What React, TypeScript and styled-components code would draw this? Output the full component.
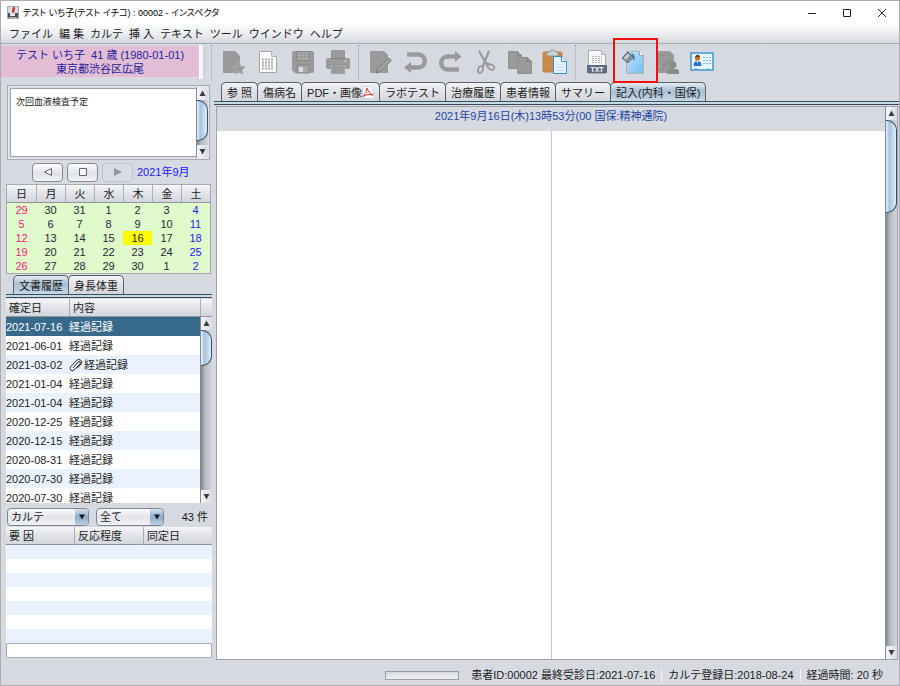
import React from "react";
import styled, { createGlobalStyle, css } from "styled-components";

const GlobalStyle = createGlobalStyle`
  *, *::before, *::after { box-sizing: border-box; }
  body { margin: 0; }
  body, button, input, select, textarea {
    font-family: "Liberation Sans", "Noto Sans CJK JP", sans-serif;
    font-size: 11px;
    line-height: 14px;
    color: #1c1c1c;
  }
`;

const headGradient = "linear-gradient(#f6f7f9, #e3e5ea 45%, #d3d6dd)";

const Window = styled.div`
  display: flex;
  flex-direction: column;
  height: 100vh;
  background: #d6d9e0;
  border: 1px solid #adadb0;
`;

const TitleBar = styled.header`
  display: flex;
  align-items: center;
  height: 23px;
  flex: none;
  padding-left: 6px;
  background: #fff;
`;

const Title = styled.h1`
  flex: 1;
  margin: 0 0 0 4px;
  font-size: 9px;
  font-weight: 400;
  font-feature-settings: "palt";
  white-space: nowrap;
  color: #000;
`;

const WindowButton = styled.button`
  display: grid;
  place-items: center;
  width: 35px;
  height: 22px;
  padding: 0;
  border: 0;
  background: none;
`;

const MenuBar = styled.nav`
  display: flex;
  align-items: center;
  gap: 6px;
  height: 20px;
  flex: none;
  padding-left: 8px;
  background: linear-gradient(#fcfcfd, #eceef1 50%, #d6d9df);
  border-bottom: 1px solid #a6abb4;
`;

const MenuItem = styled.button`
  padding: 0;
  border: 0;
  background: none;
  white-space: nowrap;
`;

const TopRow = styled.div`
  display: flex;
  align-items: center;
  height: 37px;
  flex: none;
  padding-bottom: 2px;
`;

const Patient = styled.div`
  width: 198px;
  height: 31px;
  padding-top: 2px;
  background: #e3bdd6;
  color: #23239a;
  text-align: center;
  white-space: pre;
`;

const Grip = styled.div`
  width: 6px;
  height: 34px;
  margin-right: 3px;
  border-radius: 0 3px 3px 0;
  background: linear-gradient(90deg, #fff, #eef0f3 60%, #b9bdc6);
`;

const Separator = styled.div`
  width: 1px;
  height: 34px;
  margin: 0 3px;
  border-left: 1px dotted #989ca5;
`;

const Toolbar = styled.div`
  display: flex;
  align-items: center;
`;

const ToolButton = styled.button<{ $marked?: boolean }>`
  position: relative;
  display: grid;
  place-items: center;
  width: 35px;
  height: 32px;
  padding: 0;
  border: 0;
  background: none;
  ${(p) =>
    p.$marked &&
    css`
      &::after {
        content: "";
        position: absolute;
        inset: -8px -9px -5px -1px;
        border: 2px solid #f01010;
        z-index: 2;
      }
    `}
`;

const Body = styled.div`
  display: flex;
  flex: 1;
  min-height: 0;
`;

const Side = styled.aside`
  display: flex;
  flex-direction: column;
  width: 213px;
  flex: none;
  padding: 4px 2px 2px 5px;
`;

const Memo = styled.div`
  display: flex;
  height: 75px;
  flex: none;
  margin: 0 2px 0 1px;
  padding: 1px;
  border: 1px solid #a4a9b3;
  outline: 1px solid #e6e8ec;
  outline-offset: -2px;
`;

const MemoText = styled.textarea`
  flex: 1;
  min-width: 0;
  margin: 1px 0 1px 1px;
  padding: 6px 5px;
  border: 1px solid #9da2ac;
  border-right: 0;
  background: #fff;
  font-size: 9px;
  resize: none;
  outline: none;
  overflow: hidden;
`;

const Scroll = styled.div`
  display: flex;
  flex-direction: column;
  width: 12px;
  flex: none;
  border-left: 1px solid #868b95;
  background: linear-gradient(90deg, #7f838c, #b5b9c1 35%, #d2d5db);
`;

const ScrollButton = styled.button`
  display: grid;
  place-items: center;
  height: 13px;
  flex: none;
  padding: 0;
  border: 0;
  background: linear-gradient(90deg, #f4f5f7, #d9dce2);
`;

const Track = styled.div`
  flex: 1;
  min-height: 0;
`;

const Thumb = styled.div<{ $length: number }>`
  height: ${(p) => p.$length}px;
  border: 1px solid #34506b;
  border-left: 0;
  border-radius: 0 10px 10px 0;
  background: linear-gradient(90deg, #e4eef7, #a9c4dc 35%, #b9d4ea 60%, #dceefa);
`;

const MonthNav = styled.div`
  display: flex;
  align-items: center;
  gap: 4px;
  height: 24px;
  flex: none;
  padding-left: 26px;
  color: #1a1aff;
`;

const NavButton = styled.button`
  display: grid;
  place-items: center;
  width: 31px;
  height: 19px;
  padding: 0;
  border: 1px solid #858a94;
  border-radius: 4px;
  background: linear-gradient(#fdfdfd, #e4e6ea 50%, #dcdfe4 51%, #f2f4f6);
  &:disabled {
    border-color: #bfc3ca;
    background: #d9dce2;
  }
`;

const Calendar = styled.table`
  width: 205px;
  flex: none;
  table-layout: fixed;
  border-collapse: separate;
  border-spacing: 0;
  border: 1px solid #a4a9b3;
  background: #e1facb;
  text-align: center;
`;

const DayHead = styled.th`
  height: 18px;
  padding: 0;
  font-weight: 400;
  background: ${headGradient};
  border-bottom: 1px solid #8f959f;
  & + & {
    border-left: 1px solid #a9adb6;
  }
`;

const Day = styled.td<{ $col: number; $today?: boolean }>`
  height: 14px;
  padding: 0;
  line-height: 13px;
  color: ${(p) => (p.$col === 0 ? "#e8287c" : p.$col === 6 ? "#1a1aff" : "#222838")};
  background: ${(p) => (p.$today ? "#ffff00" : "transparent")};
`;

const TabBar = styled.div<{ $inset: number }>`
  display: flex;
  flex: none;
  padding-left: ${(p) => p.$inset}px;
  border-bottom: 1px solid #3b4f63;
`;

const TabRail = styled.div`
  height: 3px;
  flex: none;
  background: #c3dbe1;
  border-bottom: 1px solid #3b4658;
`;

const Tab = styled.button<{ $active?: boolean }>`
  display: flex;
  align-items: center;
  height: 19px;
  padding: 1px 5px 0;
  border: 1px solid #5a606c;
  border-bottom: 0;
  border-radius: 5px 5px 0 0;
  margin-right: -1px;
  white-space: nowrap;
  background: ${(p) =>
    p.$active ? "linear-gradient(#e3ebf3, #a9bfd3 45%, #c3d7e6)" : "linear-gradient(#f3f4f6, #dfe1e6 50%, #d3d6dc)"};
`;

const SideTabs = styled.div`
  flex: none;
  margin-top: 1px;
`;

const ListArea = styled.div`
  display: flex;
  flex: 1;
  min-height: 0;
  margin-top: 1px;
`;

const ListClip = styled.div`
  flex: 1;
  min-width: 0;
  overflow: hidden;
`;

const ListSide = styled.div`
  display: flex;
  flex-direction: column;
`;

const HeadCorner = styled.div`
  height: 18px;
  flex: none;
  background: ${headGradient};
  border-left: 1px solid #a9adb6;
  border-bottom: 1px solid #8f959f;
`;

const ScrollHolder = styled.div`
  display: flex;
  flex: 1;
  min-height: 0;
`;

const DataTable = styled.table`
  width: 100%;
  flex: none;
  table-layout: fixed;
  border-collapse: separate;
  border-spacing: 0;
`;

const ColumnHead = styled.th<{ $width?: number }>`
  width: ${(p) => (p.$width ? `${p.$width}px` : "auto")};
  height: 18px;
  padding: 0 3px;
  text-align: left;
  font-weight: 400;
  background: ${headGradient};
  border-bottom: 1px solid #8f959f;
  & + & {
    border-left: 1px solid #a9adb6;
  }
`;

const Row = styled.tr<{ $selected?: boolean }>`
  background: #fff;
  &:nth-child(odd) {
    background: #ebf2ff;
  }
  ${(p) =>
    p.$selected &&
    css`
      &&:nth-child(odd) {
        background: #37698b;
        color: #fff;
      }
    `}
`;

const Cell = styled.td`
  height: 19px;
  padding: 0;
  white-space: nowrap;
  svg {
    vertical-align: -3px;
    margin-right: 1px;
  }
`;

const EmptyCell = styled.td`
  height: 14px;
  padding: 0;
`;

const Filters = styled.div`
  display: flex;
  align-items: center;
  gap: 7px;
  height: 24px;
  flex: none;
  padding: 4px 4px 0 1px;
`;

const SelectBox = styled.label<{ $width: number }>`
  position: relative;
  width: ${(p) => p.$width}px;
  select {
    display: block;
    width: 100%;
    height: 18px;
    padding: 0 3px;
    appearance: none;
    border: 1px solid #7f8692;
    border-radius: 4px;
    background: linear-gradient(#fbfbfc, #e2e4e9 50%, #f1f2f5);
  }
  svg {
    position: absolute;
    right: 1px;
    top: 1px;
    pointer-events: none;
  }
`;

const Count = styled.span`
  margin-left: auto;
`;

const Entry = styled.input`
  width: 100%;
  height: 15px;
  flex: none;
  padding: 0 3px;
  border: 1px solid #a4a9b3;
  background: #fff;
`;

const Main = styled.main`
  display: flex;
  flex-direction: column;
  flex: 1;
  min-width: 0;
  padding-top: 1px;
`;

const Document = styled.section`
  display: flex;
  flex: 1;
  min-height: 0;
  margin: 1px 1px 0 2px;
  border: 1px solid #9fa4ae;
`;

const Sheet = styled.div`
  display: flex;
  flex-direction: column;
  flex: 1;
  min-width: 0;
`;

const SheetTitle = styled.h2`
  height: 24px;
  flex: none;
  margin: 0;
  padding-top: 2px;
  font-size: 11px;
  font-weight: 400;
  text-align: center;
  white-space: nowrap;
  color: #2146a5;
`;

const Pages = styled.div`
  display: grid;
  grid-template-columns: 1fr 1fr;
  flex: 1;
`;

const Page = styled.div`
  background: #fff;
  & + & {
    border-left: 1px solid #c5c9d2;
  }
`;

const StatusBar = styled.footer`
  display: flex;
  align-items: center;
  justify-content: flex-end;
  height: 25px;
  flex: none;
  padding: 5px 16px 0 0;
  white-space: nowrap;
`;

const Gauge = styled.div`
  width: 74px;
  height: 9px;
  margin-right: 12px;
  border: 1px solid #999ea8;
  background: linear-gradient(#d5d8dd, #f0f1f3);
`;

const Status = styled.span`
  & + & {
    margin-left: 6px;
    padding-left: 6px;
    border-left: 1px solid #eceef2;
  }
`;

const G = "#9a9a9a";

function Icon({ children }: { children: React.ReactNode }) {
  return (
    <svg width="26" height="26" viewBox="0 0 26 26" fill="none" aria-hidden="true">
      {children}
    </svg>
  );
}

const NewDoc = () => (
  <Icon>
    <path d="M3 2h12l5 5v17H3z" fill={G} />
    <path d="m19 13 2 4.300 4.600.5-3.400 3.200.9 4.600-4.100-2.300-4.100 2.300.9-4.600-3.400-3.200 4.600-.5z" fill={G} stroke="#b4b6ba" strokeWidth=".7" />
  </Icon>
);
const GridDoc = () => (
  <Icon>
    <path d="M4.500 2.500h12l5 5v16h-17z" fill="#fafafa" stroke="#a5a5a5" />
    <path d="M16.500 2.500v5h5" fill="#e2e2e2" stroke="#b0b0b0" />
    <path d="M7 10.500h12M7 13.500h12M7 16.500h12M7 19.500h12" stroke="#b0b0b0" strokeWidth="2" strokeDasharray="2 1" />
  </Icon>
);
const Save = () => (
  <Icon>
    <path d="M2 4q0-2 2-2h18q2 0 2 2v18q0 2-2 2H5l-3-3z" fill={G} />
    <path d="M6.500 2.500h13v9h-13z" fill="#a9a9a9" stroke="#858585" />
    <path d="M8 5h10M8 8h10" stroke="#858585" strokeDasharray="2 1" />
    <path d="M7 16h12v8H7z" fill="#a7a7a7" stroke="#858585" />
    <path d="M9 18h4v5H9z" fill="#dadce0" />
  </Icon>
);
const Print = () => (
  <Icon>
    <path d="M6 1h14v8H6zM1 11q0-2 2-2h20q2 0 2 2v7q0 2-2 2H3q-2 0-2-2z" fill={G} />
    <path d="M6 9.500h14M5.500 15.500h15" stroke="#7f7f7f" />
    <path d="M6 16h14v9H6z" fill={G} stroke="#bcbec3" strokeWidth=".7" />
    <path d="M19 12h3" stroke="#c9cbcf" />
  </Icon>
);
const Edit = () => (
  <Icon>
    <path d="M3 2h14l4 4v18H3z" fill={G} />
    <path d="m9 24 1-4L22 9l2.500 2.500L13 22.500z" fill="#a0a0a0" stroke="#7d7d7d" />
    <path d="m9 24 .5-2 1.500 1.400z" fill="#666" />
  </Icon>
);
const Undo = () => (
  <Icon>
    <path d="M5 5.500h11c9 0 9 13 0 13H9" stroke={G} strokeWidth="4.500" />
    <path d="M2 18.500 9 13v11z" fill={G} />
  </Icon>
);
const Redo = () => (
  <Icon>
    <path d="M22 20.500H11c-9 0-9-13 0-13h7" stroke={G} strokeWidth="4.500" />
    <path d="M24.500 7.500 18 2v11z" fill={G} />
  </Icon>
);
const Cut = () => (
  <Icon>
    <path d="m7 2 8.500 15M17 2 10.500 18" stroke={G} strokeWidth="2.200" />
    <path d="m12 12 6 4" stroke={G} strokeWidth="2" />
    <ellipse cx="8.500" cy="20.500" rx="2.300" ry="3.500" transform="rotate(20 8.500 20.500)" stroke={G} strokeWidth="1.800" />
    <ellipse cx="19" cy="18" rx="3.500" ry="2.300" transform="rotate(30 19 18)" stroke={G} strokeWidth="1.800" />
  </Icon>
);
const Copy = () => (
  <Icon>
    <path d="M1.500 2.500h9l4 4v13h-13z" fill={G} stroke="#8f8f8f" />
    <path d="M10.500 8.500h10l4 4v12h-14z" fill={G} stroke="#8f8f8f" />
    <path d="M10.500 2.500v4h4M20.500 8.500v4h4" stroke="#838383" />
  </Icon>
);
const Paste = () => (
  <Icon>
    <rect x="1" y="3" width="19" height="20" rx="1.500" fill="#c98b4c" stroke="#b87d42" />
    <path d="M5 3h3q.5-2.500 2.500-2.500T13 3h3v4H5z" fill="#cdd1d6" stroke="#8d9299" strokeWidth=".8" />
    <path d="M11.500 7.500h8l5 5v12h-13z" fill="#e2f3fd" stroke="#3390c2" />
    <path d="M19.500 7.500v5h5" fill="#fff" stroke="#3390c2" />
    <path d="M14 15.500h8M14 18.500h8M14 21.500h8" stroke="#c3e2f4" />
  </Icon>
);
const TxtDoc = () => (
  <Icon>
    <path d="M4.500 1.500h13l4 4v19h-17z" fill="#f7f7f7" stroke="#aaa" />
    <path d="M17.500 1.500v4h4" fill="#ddd" stroke="#aaa" />
    <path d="M8 7.500h10M8 9.500h10M8 11.500h10M8 13.500h10" stroke="#b3b3b3" strokeDasharray="2 1" />
    <path d="M3 16h20v8H3z" fill="#5b6c7f" />
    <text x="13" y="23" fill="#fff" fontSize="7" fontWeight="700" textAnchor="middle" fontFamily="Liberation Sans">
      TXT
    </text>
  </Icon>
);
const FillDoc = () => (
  <Icon>
    <defs>
      <linearGradient id="sheetFill" x1="0" y1="0" x2="1" y2="1">
        <stop offset="0" stopColor="#c6e6fc" />
        <stop offset="1" stopColor="#74bcf3" />
      </linearGradient>
    </defs>
    <path d="M7.500 2.500h13l4 4v18h-17z" fill="url(#sheetFill)" stroke="#a8b6c2" />
    <path d="M20.500 2.500v4h4" fill="#fff" stroke="#98a8b5" />
    <path d="m3 9 6-6 5 5-5 6z" fill="#8b9198" stroke="#626970" />
    <path d="m5 9 4-4 1.500 1.500-4 4z" fill="#d8dcdf" />
    <path d="M12 4c4 1 4 4 3.500 8-2-1-2-3-2-5z" fill="#2a7cc4" />
  </Icon>
);
const StampDoc = () => (
  <Icon>
    <path d="M3 2h13l4 4v18H3z" fill={G} />
    <path d="m10 14 5-5 2 2-5 5-3 1zM6 6h6M6 20h5" stroke="#848484" />
    <circle cx="19" cy="16" r="3.500" fill="#8b8b8b" />
    <path d="M13 25v-3q0-2 3-2h6q3 0 3 2v3z" fill="#8b8b8b" />
  </Icon>
);
const Card = () => (
  <Icon>
    <path d="M2 4h22v17h-4l-1-1-1 1H8l-1-1-1 1H2z" fill="#e7f7ff" stroke="#3c9bcb" strokeWidth="1.500" />
    <circle cx="8.500" cy="9" r="2.600" fill="#c9702f" />
    <path d="M6 8q1-3 4-2l1 2z" fill="#643717" />
    <path d="M4.500 17q0-5 4-5t4 5z" fill="#2c73c4" />
    <path d="m7.500 12 1 2.500 1-2.500z" fill="#fff" />
    <path d="M14 8.500h8M14 11.500h8M14 14.500h8" stroke="#86bad7" strokeDasharray="2 1" />
  </Icon>
);

const Arrow = ({ down }: { down?: boolean }) => (
  <svg width="7" height="7" viewBox="0 0 7 7" aria-hidden="true">
    <path d={down ? "M.5 1h6L3.500 6.500z" : "M.5 6h6L3.500.5z"} fill="#3a3d44" />
  </svg>
);

const AppIcon = () => (
  <svg width="12" height="13" viewBox="0 0 12 13" aria-hidden="true">
    <path d="M.5.5h11v12H.5z" fill="#d5dbe0" stroke="#a4aab0" />
    <path d="M1 7h10v5H1z" fill="#454d57" />
    <path d="M3 7h5v3H3z" fill="#e4e8ec" />
    <path d="M6 1.500C9 3 4 4 7 6.500" stroke="#d3231c" strokeWidth="2" fill="none" />
    <path d="M2 11.500h8" stroke="#aab4bf" />
  </svg>
);

const PdfIcon = () => (
  <svg width="12" height="13" viewBox="0 0 12 13" aria-hidden="true">
    <path d="M.5.5h8l3 3v9H.5z" fill="#fbfbfb" stroke="#d3d3d3" />
    <path d="M1 10.500Q5 7 5 2q1 5 6 7-5-2-10 1.500z" fill="none" stroke="#e23a32" />
  </svg>
);

const Clip = () => (
  <svg width="14" height="14" viewBox="0 0 14 14" fill="none" stroke="#2b2b2b" aria-hidden="true">
    <path d="m4 10 5-6q1-1 2 0t0 2l-6 6q-2 1.500-3.300 0t0-3.300l6-6.500q2-1.700 4 0t.300 3.800L8 10.500" />
  </svg>
);

const SelectArrow = () => (
  <svg width="13" height="16" viewBox="0 0 13 16" aria-hidden="true">
    <defs>
      <linearGradient id="selectFace" x1="0" y1="0" x2="0" y2="1">
        <stop offset="0" stopColor="#d3e1ee" />
        <stop offset=".5" stopColor="#8eabc6" />
        <stop offset="1" stopColor="#b9d3e8" />
      </linearGradient>
    </defs>
    <path d="M0 0h10q3 0 3 3v10q0 3-3 3H0z" fill="url(#selectFace)" />
    <path d="M4 5.500h6l-3 5z" fill="#15181c" />
  </svg>
);

function ScrollBar({ thumb }: { thumb: number }) {
  return (
    <Scroll>
      <ScrollButton aria-label="上へ">
        <Arrow />
      </ScrollButton>
      <Track>
        <Thumb $length={thumb} />
      </Track>
      <ScrollButton aria-label="下へ">
        <Arrow down />
      </ScrollButton>
    </Scroll>
  );
}

const menus = ["ファイル", "編 集", "カルテ", "挿 入", "テキスト", "ツール", "ウインドウ", "ヘルプ"];

const tools: { label: string; icon: React.ReactNode; marked?: boolean }[][] = [
  [
    { label: "新規", icon: <NewDoc /> },
    { label: "開く", icon: <GridDoc /> },
    { label: "保存", icon: <Save /> },
    { label: "印刷", icon: <Print /> },
  ],
  [
    { label: "修正", icon: <Edit /> },
    { label: "元に戻す", icon: <Undo /> },
    { label: "やり直し", icon: <Redo /> },
    { label: "切り取り", icon: <Cut /> },
    { label: "コピー", icon: <Copy /> },
    { label: "貼り付け", icon: <Paste /> },
  ],
  [
    { label: "テキスト", icon: <TxtDoc /> },
    { label: "スキーマ", icon: <FillDoc />, marked: true },
    { label: "スタンプ", icon: <StampDoc /> },
    { label: "保険", icon: <Card /> },
  ],
];

const weekdays = ["日", "月", "火", "水", "木", "金", "土"];
const weeks = [
  [29, 30, 31, 1, 2, 3, 4],
  [5, 6, 7, 8, 9, 10, 11],
  [12, 13, 14, 15, 16, 17, 18],
  [19, 20, 21, 22, 23, 24, 25],
  [26, 27, 28, 29, 30, 1, 2],
];

const history = [
  "2021-07-16",
  "2021-06-01",
  "2021-03-02",
  "2021-01-04",
  "2021-01-04",
  "2020-12-25",
  "2020-12-15",
  "2020-08-31",
  "2020-07-30",
  "2020-07-30",
];

const tabs = ["参 照", "傷病名", "PDF・画像", "ラボテスト", "治療履歴", "患者情報", "サマリー", "記入(内科・国保)"];

export default function App() {
  return (
    <Window>
      <GlobalStyle />
      <TitleBar>
        <AppIcon />
        <Title>テスト いち子(テスト イチコ) : 00002 - インスペクタ</Title>
        <WindowButton aria-label="最小化">
          <svg width="10" height="10" stroke="#222">
            <path d="M1 5.500h8" />
          </svg>
        </WindowButton>
        <WindowButton aria-label="最大化">
          <svg width="10" height="10" stroke="#222" fill="none">
            <path d="M1.500 1.500h7v7h-7z" />
          </svg>
        </WindowButton>
        <WindowButton aria-label="閉じる">
          <svg width="10" height="10" stroke="#222">
            <path d="m1 1 8 8M9 1 1 9" />
          </svg>
        </WindowButton>
      </TitleBar>
      <MenuBar>
        {menus.map((m) => (
          <MenuItem key={m}>{m}</MenuItem>
        ))}
      </MenuBar>
      <TopRow>
        <Patient>{"テスト いち子  41 歳 (1980-01-01)\n東京都渋谷区広尾"}</Patient>
        <Grip />
        <Toolbar role="toolbar">
          {tools.map((group, i) => (
            <React.Fragment key={i}>
              <Separator />
              {group.map((t) => (
                <ToolButton key={t.label} aria-label={t.label} $marked={t.marked}>
                  {t.icon}
                </ToolButton>
              ))}
            </React.Fragment>
          ))}
        </Toolbar>
      </TopRow>
      <Body>
        <Side>
          <Memo>
            <MemoText aria-label="メモ" defaultValue="次回血液検査予定" />
            <ScrollBar thumb={41} />
          </Memo>
          <MonthNav>
            <NavButton aria-label="前の月">
              <svg width="10" height="10" fill="#f4f4f4" stroke="#63676f">
                <path d="M8.500 1.500v7L1.500 5z" />
              </svg>
            </NavButton>
            <NavButton aria-label="今月">
              <svg width="10" height="10" fill="#f4f4f4" stroke="#63676f">
                <path d="M1.500 1.500h7v7h-7z" />
              </svg>
            </NavButton>
            <NavButton aria-label="次の月" disabled>
              <svg width="10" height="10" fill="#92969e">
                <path d="M1 1v8l8-4z" />
              </svg>
            </NavButton>
            2021年9月
          </MonthNav>
          <Calendar>
            <thead>
              <tr>
                {weekdays.map((d) => (
                  <DayHead key={d}>{d}</DayHead>
                ))}
              </tr>
            </thead>
            <tbody>
              {weeks.map((w) => (
                <tr key={w[0]}>
                  {w.map((d, c) => (
                    <Day key={c} $col={c} $today={d === 16}>
                      {d}
                    </Day>
                  ))}
                </tr>
              ))}
            </tbody>
          </Calendar>
          <SideTabs>
            <TabBar role="tablist" $inset={7}>
              <Tab role="tab" aria-selected $active>
                文書履歴
              </Tab>
              <Tab role="tab">身長体重</Tab>
            </TabBar>
            <TabRail />
          </SideTabs>
          <ListArea>
            <ListClip>
              <DataTable>
                <thead>
                  <tr>
                    <ColumnHead $width={63}>確定日</ColumnHead>
                    <ColumnHead>内容</ColumnHead>
                  </tr>
                </thead>
                <tbody>
                  {history.map((d, i) => (
                    <Row key={i} $selected={i === 0}>
                      <Cell>{d}</Cell>
                      <Cell>
                        {i === 2 && <Clip />}
                        経過記録
                      </Cell>
                    </Row>
                  ))}
                </tbody>
              </DataTable>
            </ListClip>
            <ListSide>
              <HeadCorner />
              <ScrollHolder>
                <ScrollBar thumb={36} />
              </ScrollHolder>
            </ListSide>
          </ListArea>
          <Filters>
            <SelectBox $width={82}>
              <select aria-label="文書の種類">
                <option>カルテ</option>
              </select>
              <SelectArrow />
            </SelectBox>
            <SelectBox $width={68}>
              <select aria-label="期間">
                <option>全て</option>
              </select>
              <SelectArrow />
            </SelectBox>
            <Count>43 件</Count>
          </Filters>
          <DataTable>
            <thead>
              <tr>
                <ColumnHead $width={68}>要 因</ColumnHead>
                <ColumnHead $width={69}>反応程度</ColumnHead>
                <ColumnHead>同定日</ColumnHead>
              </tr>
            </thead>
            <tbody>
              {Array.from({ length: 7 }, (_, i) => (
                <Row key={i}>
                  <EmptyCell colSpan={3} />
                </Row>
              ))}
            </tbody>
          </DataTable>
          <Entry aria-label="入力" />
        </Side>
        <Main>
          <TabBar role="tablist" $inset={7}>
            {tabs.map((t, i) => (
              <Tab key={t} role="tab" $active={i === 7} aria-selected={i === 7}>
                {t}
                {i === 2 && <PdfIcon />}
              </Tab>
            ))}
          </TabBar>
          <TabRail />
          <Document>
            <Sheet>
              <SheetTitle>2021年9月16日(木)13時53分(00 国保:精神通院)</SheetTitle>
              <Pages>
                <Page />
                <Page />
              </Pages>
            </Sheet>
            <ScrollBar thumb={93} />
          </Document>
        </Main>
      </Body>
      <StatusBar>
        <Gauge role="progressbar" aria-label="進行状況" />
        <Status>患者ID:00002 最終受診日:2021-07-16</Status>
        <Status>カルテ登録日:2018-08-24</Status>
        <Status>経過時間: 20 秒</Status>
      </StatusBar>
    </Window>
  );
}
